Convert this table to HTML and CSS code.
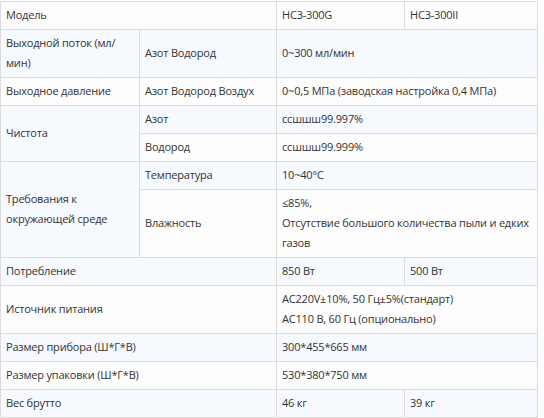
FILE: index.html
```html
<!DOCTYPE html>
<html>
<head>
<meta charset="utf-8">
<link rel="stylesheet" href="styles.css">
</head>
<body>
<table class="spec">
  <colgroup>
    <col class="c1"><col class="c2"><col class="c3"><col class="c4">
  </colgroup>
  <tr><td colspan="2">Модель</td><td>HC3-300G</td><td>HC3-300II</td></tr>
  <tr><td>Выходной поток (мл/<br>мин)</td><td>Азот Водород</td><td colspan="2">0~300 мл/мин</td></tr>
  <tr><td>Выходное давление</td><td>Азот Водород Воздух</td><td colspan="2">0~0,5 МПа (заводская настройка 0,4 МПа)</td></tr>
  <tr><td rowspan="2">Чистота</td><td>Азот</td><td colspan="2">ссшшш99.997%</td></tr>
  <tr><td>Водород</td><td colspan="2">ссшшш99.999%</td></tr>
  <tr><td rowspan="2">Требования к<br>окружающей среде</td><td>Температура</td><td colspan="2">10~40°C</td></tr>
  <tr><td>Влажность</td><td colspan="2">≤85%,<br>Отсутствие большого количества пыли и едких<br>газов</td></tr>
  <tr><td colspan="2">Потребление</td><td>850 Вт</td><td>500 Вт</td></tr>
  <tr><td colspan="2">Источник питания</td><td colspan="2">AC220V±10%, 50 Гц±5%(стандарт)<br>AC110 В, 60 Гц (опционально)</td></tr>
  <tr><td colspan="2">Размер прибора (Ш*Г*В)</td><td colspan="2">300*455*665 мм</td></tr>
  <tr><td colspan="2">Размер упаковки (Ш*Г*В)</td><td colspan="2">530*380*750 мм</td></tr>
  <tr><td colspan="2">Вес брутто</td><td>46 кг</td><td>39 кг</td></tr>
</table>
</body>
</html>
```
FILE: styles.css
```css
html, body {
  margin: 0;
  padding: 0;
  background: #ffffff;
}
body {
  padding-top: 1px;
  font-family: "Open Sans", "Noto Sans", sans-serif;
  font-size: 11px;
  letter-spacing: -0.2px;
  color: #333333;
}
.spec {
  border-collapse: collapse;
  table-layout: fixed;
  width: 537px;
}
.c1 { width: 139px; }
.c2 { width: 137px; }
.c3 { width: 128px; }
.c4 { width: 133px; }
.spec td {
  border: 1px solid #dcdcdc;
  padding: 3px 4px 4px 5px;
  line-height: 20px;
  vertical-align: middle;
  background: #fdfdfd;
  white-space: nowrap;
}
.spec tr:nth-child(even) td {
  background: #f6f9fe;
}
```
